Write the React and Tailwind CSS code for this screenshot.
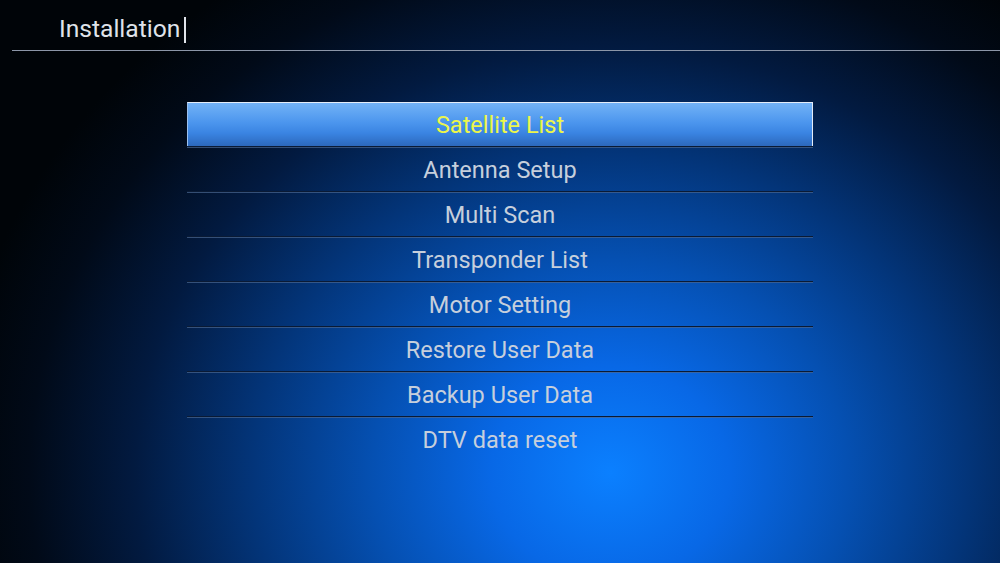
import React from 'react';

const items = [
  'Satellite List',
  'Antenna Setup',
  'Multi Scan',
  'Transponder List',
  'Motor Setting',
  'Restore User Data',
  'Backup User Data',
  'DTV data reset',
];

const font = { fontFamily: 'Roboto, "Noto Sans", sans-serif' };

export default function App() {
  const selected = 0;

  return (
    <div
      className="w-[1000px] h-[563px] overflow-hidden bg-[radial-gradient(ellipse_66%_105%_at_61%_84%,#0b80ff_0%,#0868e6_18%,#0550b2_36%,#03357a_54%,#021a40_72%,#010a18_88%,#000408_100%)]"
      style={font}
    >
      {/* Title bar */}
      <div className="h-[51px] ml-[12px] border-b border-[#8c96a8] flex items-center pl-[47px] pt-[9px]">
        <span className="text-[24.6px] text-[#dfe3ea]">Installation</span>
        <span className="ml-[4px] w-[1.5px] h-[26px] bg-[#e0e4ea]" />
      </div>

      {/* Menu list */}
      <div className="ml-[187px] mt-[51px] w-[626px] flex flex-col">
        {items.map((label, i) => (
          <div key={label} className="flex flex-col">
            {i === selected ? (
              <div className="h-[44px] pt-[2px] flex items-center justify-center border-t border-r border-[#e4ecf8] border-l border-l-[#9cc0ee] bg-[linear-gradient(180deg,#72b2f6_0%,#4c96ee_45%,#3a84e2_70%,#2c68bc_100%)] shadow-[0_1px_0_#0a1c3a]">
                <span className="text-[23.5px] text-[#ecf64a]">{label}</span>
              </div>
            ) : (
              <div className="h-[43px] pt-[2px] flex items-center justify-center">
                <span className="text-[23.5px] text-[#c6cfdc]">{label}</span>
              </div>
            )}
            {i < items.length - 1 && (
              <div className="flex flex-col">
                <div className="h-[1px] bg-[#0a1a34]" />
                <div className="h-[1px] bg-[#4a6690]/70" />
              </div>
            )}
          </div>
        ))}
      </div>
    </div>
  );
}
